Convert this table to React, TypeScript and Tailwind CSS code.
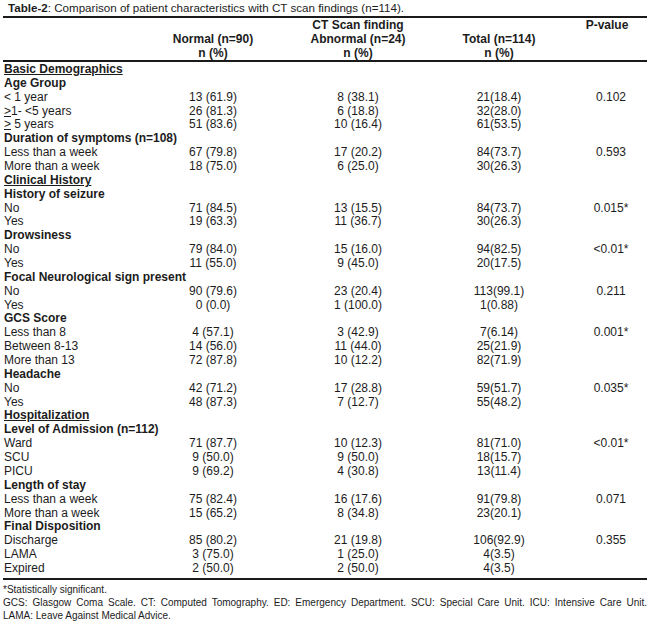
import React from "react";

type Row =
  | { k: "s"; t: string }
  | { k: "g"; t: string }
  | { k: "d"; t: React.ReactNode; a: string; b: string; c: string; p?: string };

const ge = (rest: string) => (
  <>
    <span className="underline">&gt;</span>
    {rest}
  </>
);

const rows: Row[] = [
  { k: "s", t: "Basic Demographics" },
  { k: "g", t: "Age Group" },
  { k: "d", t: "< 1 year", a: "13 (61.9)", b: "8 (38.1)", c: "21(18.4)", p: "0.102" },
  { k: "d", t: ge("1- <5 years"), a: "26 (81.3)", b: "6 (18.8)", c: "32(28.0)" },
  { k: "d", t: ge(" 5 years"), a: "51 (83.6)", b: "10 (16.4)", c: "61(53.5)" },
  { k: "g", t: "Duration of symptoms (n=108)" },
  { k: "d", t: "Less than a week", a: "67 (79.8)", b: "17 (20.2)", c: "84(73.7)", p: "0.593" },
  { k: "d", t: "More than a week", a: "18 (75.0)", b: "6 (25.0)", c: "30(26.3)" },
  { k: "s", t: "Clinical History" },
  { k: "g", t: "History of seizure" },
  { k: "d", t: "No", a: "71 (84.5)", b: "13 (15.5)", c: "84(73.7)", p: "0.015*" },
  { k: "d", t: "Yes", a: "19 (63.3)", b: "11 (36.7)", c: "30(26.3)" },
  { k: "g", t: "Drowsiness" },
  { k: "d", t: "No", a: "79 (84.0)", b: "15 (16.0)", c: "94(82.5)", p: "<0.01*" },
  { k: "d", t: "Yes", a: "11 (55.0)", b: "9 (45.0)", c: "20(17.5)" },
  { k: "g", t: "Focal Neurological sign present" },
  { k: "d", t: "No", a: "90 (79.6)", b: "23 (20.4)", c: "113(99.1)", p: "0.211" },
  { k: "d", t: "Yes", a: "0 (0.0)", b: "1 (100.0)", c: "1(0.88)" },
  { k: "g", t: "GCS Score" },
  { k: "d", t: "Less than 8", a: "4 (57.1)", b: "3 (42.9)", c: "7(6.14)", p: "0.001*" },
  { k: "d", t: "Between 8-13", a: "14 (56.0)", b: "11 (44.0)", c: "25(21.9)" },
  { k: "d", t: "More than 13", a: "72 (87.8)", b: "10 (12.2)", c: "82(71.9)" },
  { k: "g", t: "Headache" },
  { k: "d", t: "No", a: "42 (71.2)", b: "17 (28.8)", c: "59(51.7)", p: "0.035*" },
  { k: "d", t: "Yes", a: "48 (87.3)", b: "7 (12.7)", c: "55(48.2)" },
  { k: "s", t: "Hospitalization" },
  { k: "g", t: "Level of Admission (n=112)" },
  { k: "d", t: "Ward", a: "71 (87.7)", b: "10 (12.3)", c: "81(71.0)", p: "<0.01*" },
  { k: "d", t: "SCU", a: "9 (50.0)", b: "9 (50.0)", c: "18(15.7)" },
  { k: "d", t: "PICU", a: "9 (69.2)", b: "4 (30.8)", c: "13(11.4)" },
  { k: "g", t: "Length of stay" },
  { k: "d", t: "Less than a week", a: "75 (82.4)", b: "16 (17.6)", c: "91(79.8)", p: "0.071" },
  { k: "d", t: "More than a week", a: "15 (65.2)", b: "8 (34.8)", c: "23(20.1)" },
  { k: "g", t: "Final Disposition" },
  { k: "d", t: "Discharge", a: "85 (80.2)", b: "21 (19.8)", c: "106(92.9)", p: "0.355" },
  { k: "d", t: "LAMA", a: "3 (75.0)", b: "1 (25.0)", c: "4(3.5)" },
  { k: "d", t: "Expired", a: "2 (50.0)", b: "2 (50.0)", c: "4(3.5)" },
];

const grid = "grid grid-cols-[147px_126px_164px_118px_89px]";

export default function App() {
  return (
    <div
      className="w-[650px] h-[622px] bg-white text-[#1c1c1c] overflow-hidden"
      style={{ fontFamily: '"Liberation Sans", Arial, sans-serif' }}
    >
      <div className="pl-[8px] h-[16px] text-[11.6px] leading-[16px] whitespace-nowrap">
        <span className="font-bold">Table-2</span>: Comparison of patient characteristics with CT scan findings (n=114).
      </div>
      <div className="ml-[3px] w-[644px]">
        <div className="border-t-2 border-b-2 border-[#1a1a1a] h-[46px] text-[12px] font-bold">
          <div className={`${grid} leading-[14px]`}>
            <div />
            <div />
            <div className="text-center">CT Scan finding</div>
            <div />
            <div className="text-center pl-[9px]">P-value</div>
            <div />
            <div className="text-center">Normal (n=90)</div>
            <div className="text-center">Abnormal (n=24)</div>
            <div className="text-center">Total (n=114)</div>
            <div />
            <div />
            <div className="text-center">n (%)</div>
            <div className="text-center">n (%)</div>
            <div className="text-center">n (%)</div>
            <div />
          </div>
        </div>
        <div className="border-b-2 border-[#1a1a1a] text-[12px] pt-px pb-[2px]">
          {rows.map((r, i) =>
            r.k === "d" ? (
              <div key={i} className={`${grid} h-[13.86px] leading-[13.86px] whitespace-nowrap`}>
                <div className="pl-px">{r.t}</div>
                <div className="text-center">{r.a}</div>
                <div className="text-center">{r.b}</div>
                <div className="text-center">{r.c}</div>
                <div className="text-center pl-[17px]">{r.p ?? ""}</div>
              </div>
            ) : (
              <div
                key={i}
                className={`h-[13.86px] leading-[13.86px] pl-px font-bold whitespace-nowrap ${
                  r.k === "s" ? "underline" : ""
                }`}
              >
                {r.t}
              </div>
            )
          )}
        </div>
        <div className="text-[10px] leading-[13px] pt-[3px]">
          <div>*Statistically significant.</div>
          <div className="text-justify [text-align-last:justify]">
            GCS: Glasgow Coma Scale. CT: Computed Tomography. ED: Emergency Department. SCU: Special Care Unit. ICU: Intensive Care Unit.
          </div>
          <div>LAMA: Leave Against Medical Advice.</div>
        </div>
      </div>
    </div>
  );
}
